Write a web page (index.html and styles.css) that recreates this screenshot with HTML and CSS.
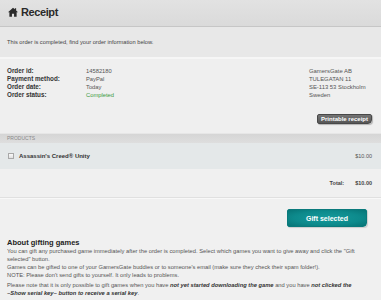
FILE: index.html
```html
<!DOCTYPE html>
<html>
<head>
<meta charset="utf-8">
<link rel="stylesheet" href="styles.css">
</head>
<body>
<div class="page">
  <header class="title-bar">
    <svg class="home" viewBox="0 0 16 16" aria-hidden="true"><path d="M8 1 L0 8.2 L2.2 8.2 L2.2 15.5 L6.3 15.5 L6.3 10.8 L9.7 10.8 L9.7 15.5 L13.8 15.5 L13.8 8.2 L16 8.2 L13 5.5 L13 1.8 L11 1.8 L11 3.7 Z" fill="#2b2b2b"/></svg>
    <h1 class="title">Receipt</h1>
  </header>
  <div class="notice">This order is completed, find your order information below.</div>
  <section class="order">
    <div class="order-top">
      <dl class="details">
        <dt>Order id:</dt><dd>14582180</dd>
        <dt>Payment method:</dt><dd>PayPal</dd>
        <dt>Order date:</dt><dd>Today</dd>
        <dt>Order status:</dt><dd class="ok">Completed</dd>
      </dl>
      <address class="company">GamersGate AB<br>TULEGATAN 11<br>SE-113 53 Stockholm<br>Sweden</address>
    </div>
    <div class="actions"><button class="btn-print">Printable receipt</button></div>
  </section>
  <section class="products">
    <div class="products-head">PRODUCTS</div>
    <div class="product-row">
      <span class="check"></span>
      <span class="name">Assassin's Creed® Unity</span>
      <span class="price">$10.00</span>
    </div>
    <div class="total-row">
      <span class="total-label">Total:</span>
      <span class="total-price">$10.00</span>
    </div>
  </section>
  <div class="gift-bar"><button class="btn-gift">Gift selected</button></div>
  <section class="about">
    <h2>About gifting games</h2>
    <p>You can gift any purchased game immediately after the order is completed. Select which games you want to give away and click the "Gift selected" button.</p>
    <p>Games can be gifted to one of your GamersGate buddies or to someone's email (make sure they check their spam folder!).<br>NOTE: Please don't send gifts to yourself. It only leads to problems.</p>
    <p class="last">Please note that it is only possible to gift games when you have <em>not yet started downloading the game</em> and you have <em>not clicked the<br>~Show serial key~ button to receive a serial key</em>.</p>
  </section>
</div>
</body>
</html>
```
FILE: styles.css
```css
* { box-sizing: border-box; }
html, body { margin: 0; padding: 0; }
body {
  background: #f0f0f0;
  font-family: "Liberation Sans", Arial, sans-serif;
  color: #444;
  width: 381px;
  height: 300px;
  overflow: hidden;
}
.page { display: flex; flex-direction: column; }

.title-bar {
  height: 27px;
  background: linear-gradient(#e2e2e2, #dadada);
  border-bottom: 1px solid #c6c6c6;
  display: flex;
  align-items: center;
  padding: 0 0 2px 8px;
  gap: 3px;
}
.home { width: 10px; height: 10px; display: block; }
.title {
  margin: 0;
  font-size: 11px;
  font-weight: bold;
  letter-spacing: -0.4px;
  color: #2a2a2a;
  line-height: 12px;
}

.notice {
  height: 32px;
  background: #e8e8e8;
  border-bottom: 2px solid #f6f6f6;
  padding: 0 7px;
  font-size: 5.7px;
  line-height: 30px;
  color: #444;
}

.order {
  background: #efefef;
  padding: 8px 9px 9px 7px;
  border-bottom: 1px solid #e6e6e6;
}
.order-top { display: flex; }
.details {
  margin: 0;
  display: grid;
  grid-template-columns: 79px auto;
  line-height: 8px;
  flex: 1;
}
.details dt { font-size: 6.3px; font-weight: bold; color: #333; }
.details dd { margin: 0; font-size: 5.8px; color: #555; }
.details dd.ok { color: #3d9a3d; }
.company {
  width: 63px;
  font-style: normal;
  font-size: 5.9px;
  line-height: 8px;
  color: #555;
  white-space: nowrap;
}
.actions { display: flex; justify-content: flex-end; margin-top: 15px; }
.btn-print {
  height: 10px;
  width: 55px;
  padding: 0;
  border: 1px solid #484848;
  border-radius: 2px 2px 4px 2px;
  background: linear-gradient(#747474, #575757);
  color: #fff;
  font-family: inherit;
  font-size: 6px;
  font-weight: bold;
  line-height: 8px;
  box-shadow: 1px 1px 1px rgba(0,0,0,0.25);
}

.products { display: flex; flex-direction: column; }
.products-head {
  height: 9px;
  background: linear-gradient(#d5d5d5, #dedede);
  padding-left: 7px;
  font-size: 5px;
  line-height: 9px;
  color: #8a8a8a;
}
.product-row {
  height: 26px;
  background: #e4e8e9;
  display: flex;
  align-items: center;
  padding: 0 9px 0 8px;
}
.check {
  width: 6px; height: 6px;
  border: 1px solid #a8a8a8;
  background: linear-gradient(#fafafa, #e0e0e0);
  margin-right: 5px;
}
.name { font-size: 6px; font-weight: bold; color: #333; flex: 1; }
.price { font-size: 5.5px; color: #555; }
.total-row {
  height: 29px;
  display: flex;
  justify-content: flex-end;
  align-items: center;
  gap: 11px;
  padding: 0 9px 0 7px;
  border-bottom: 1px solid #e0e0e0;
  font-size: 5.5px;
  font-weight: bold;
  color: #444;
}
.gift-bar {
  border-top: 1px solid #f8f8f8;
  display: flex;
  justify-content: flex-end;
  padding: 10px 14px 0 0;
}
.btn-gift {
  width: 80px;
  height: 18px;
  padding: 0;
  border: 1px solid #0a7a7c;
  border-radius: 2px 2px 4px 2px;
  background: radial-gradient(ellipse at center, #159a9c 0%, #0d8a8c 60%, #077476 100%);
  color: #fff;
  font-family: inherit;
  font-size: 7px;
  font-weight: bold;
  box-shadow: 1px 1px 1px rgba(0,0,0,0.15);
}

.about { padding: 12px 4px 0 7px; }
.about h2 {
  margin: 0;
  font-size: 7.5px;
  line-height: 8px;
  color: #222;
}
.about p {
  margin: 0;
  font-size: 5.75px;
  line-height: 8px;
  color: #555;
}
.about p.last { margin-top: 2px; }
.about em { font-weight: bold; font-style: italic; color: #333; }
```
